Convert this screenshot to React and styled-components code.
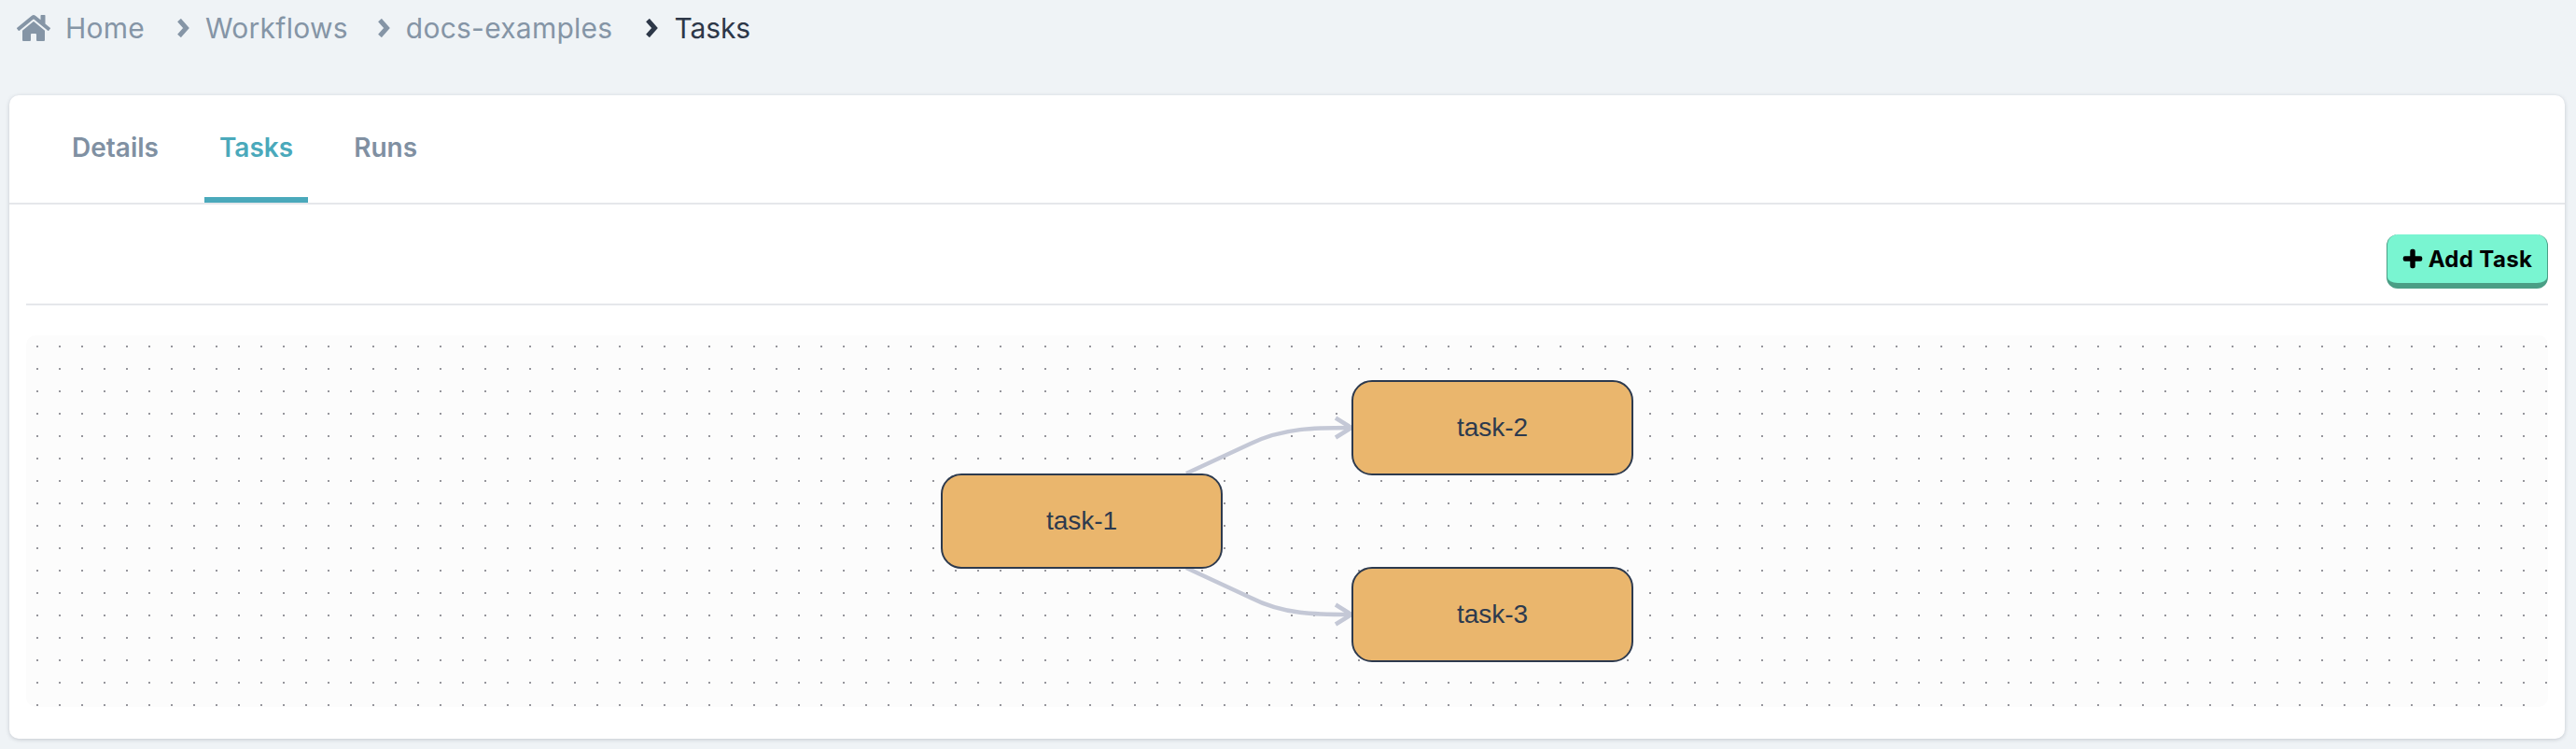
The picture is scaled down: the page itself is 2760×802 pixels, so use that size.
import React from "react";
import styled, { createGlobalStyle } from "styled-components";
import { FaHome, FaPlus } from "react-icons/fa";

const Global = createGlobalStyle`
  html, body { margin: 0; padding: 0; background: #eff3f6; }
  body { font-family: Inter, "Liberation Sans", sans-serif; }
  * { box-sizing: border-box; }
`;

const Page = styled.div`
  width: 2760px;
  height: 802px;
  padding: 0 12px 0 10px;
  display: flex;
  flex-direction: column;
  overflow: hidden;
`;

const Breadcrumbs = styled.nav`
  height: 102px;
  padding: 12px 0 0 8px;
  display: flex;
  align-items: flex-start;
  font-size: 30px;
  line-height: 36px;
`;

const Crumb = styled.span`
  display: flex;
  align-items: center;
  height: 36px;
  color: ${(p) => (p.$current ? "#2d3748" : "#8595a6")};
  letter-spacing: ${(p) => (p.$current ? "-0.1px" : "0.25px")};
  margin-left: ${(p) => p.$offset || 0}px;
`;

const HomeIcon = styled(FaHome)`
  width: 36px;
  height: 32px;
  margin-right: 16px;
  flex: none;
`;

const ChevronSvg = styled.svg`
  width: 14px;
  height: 20px;
  margin-right: 17px;
  flex: none;
`;

const Chevron = () => (
  <ChevronSvg viewBox="0 0 14 20">
    <path d="M3 1.500 L10.500 10 L3 18.500" fill="none" stroke="currentColor" strokeWidth="5" />
  </ChevronSvg>
);

const Card = styled.section`
  width: 2738px;
  height: 689px;
  background: #fff;
  border-radius: 10px;
  box-shadow: 0 1px 4px rgba(45, 55, 72, 0.22);
  display: flex;
  flex-direction: column;
`;

const TabBar = styled.div`
  height: 117px;
  padding-left: 51px;
  display: flex;
  gap: 33px;
  border-bottom: 2px solid #e5e7eb;
`;

const Tab = styled.div`
  padding: 38px 16px 0;
  height: 115px;
  font-size: 28px;
  line-height: 36px;
  font-weight: 600;
  color: ${(p) => (p.$active ? "#4aa9bb" : "#8090a2")};
  border-bottom: 6px solid ${(p) => (p.$active ? "#4aa9bb" : "transparent")};
`;

const Body = styled.div`
  flex: 1;
  padding: 0 18px 34px;
  display: flex;
  flex-direction: column;
`;

const Toolbar = styled.div`
  height: 108px;
  padding-top: 32px;
  display: flex;
  justify-content: flex-end;
  align-items: flex-start;
  border-bottom: 2px solid #e5e7eb;
`;

const AddButton = styled.button`
  width: 173px;
  height: 58px;
  border: 1px solid #4a9e85;
  border-bottom-width: 6px;
  border-top: 0;
  border-radius: 12px;
  background: #79f5d1;
  color: #000;
  font-family: Inter, "Liberation Sans", sans-serif;
  font-size: 24px;
  font-weight: 700;
  letter-spacing: 0.35px;
  display: flex;
  align-items: center;
  justify-content: center;
  gap: 6px;
  padding: 0;
`;

const PlusIcon = styled(FaPlus)`
  width: 22px;
  height: 22px;
  stroke: #000;
  stroke-width: 30;
`;

const Canvas = styled.div`
  position: relative;
  margin-top: 32px;
  height: 398px;
  background: #fcfcfc;
  border-radius: 10px;
  overflow: hidden;
`;

const Layer = styled.svg`
  position: absolute;
  left: 0;
  top: 0;
`;

const Node = styled.div`
  position: absolute;
  width: 302px;
  height: 102px;
  background: #eab66d;
  border: 2px solid #2d3a4e;
  border-radius: 22px;
  display: flex;
  align-items: center;
  justify-content: center;
  font-family: "Liberation Sans", Arial, sans-serif;
  font-size: 28px;
  color: #2d3a4e;
`;

const OX = 28;
const OY = 359;

const nodes = [
  { id: "task-1", x: 1008, y: 507 },
  { id: "task-2", x: 1448, y: 407 },
  { id: "task-3", x: 1448, y: 607 },
];

export default function App() {
  return (
    <Page>
      <Global />
      <Breadcrumbs>
        <Crumb><HomeIcon />Home</Crumb>
        <Crumb $offset={34}><Chevron />Workflows</Crumb>
        <Crumb $offset={31}><Chevron />docs-examples</Crumb>
        <Crumb $offset={35} $current><Chevron />Tasks</Crumb>
      </Breadcrumbs>
      <Card>
        <TabBar>
          <Tab>Details</Tab>
          <Tab $active>Tasks</Tab>
          <Tab>Runs</Tab>
        </TabBar>
        <Body>
          <Toolbar>
            <AddButton><PlusIcon />Add Task</AddButton>
          </Toolbar>
          <Canvas>
            <Layer width="2702" height="398">
              <defs>
                <pattern id="dots" x="11" y="11" width="24" height="24" patternUnits="userSpaceOnUse">
                  <rect width="2" height="2" fill="#96969c" />
                </pattern>
              </defs>
              <rect width="2702" height="398" fill="url(#dots)" />
              <g transform={`translate(${-OX} ${-OY})`} fill="none" stroke="#c4c8d6" strokeWidth="4.5">
                <path d="M1271 507 L1340 475 C1375 458 1410 458 1447 458" />
                <path d="M1431 447.500 L1448 458 L1431 468.500" />
                <path d="M1271 608 L1340 640 C1375 658 1410 658 1447 658" />
                <path d="M1431 647.500 L1448 658 L1431 668.500" />
              </g>
            </Layer>
            {nodes.map((n) => (
              <Node key={n.id} style={{ left: n.x - OX, top: n.y - OY }}>{n.id}</Node>
            ))}
          </Canvas>
        </Body>
      </Card>
    </Page>
  );
}
